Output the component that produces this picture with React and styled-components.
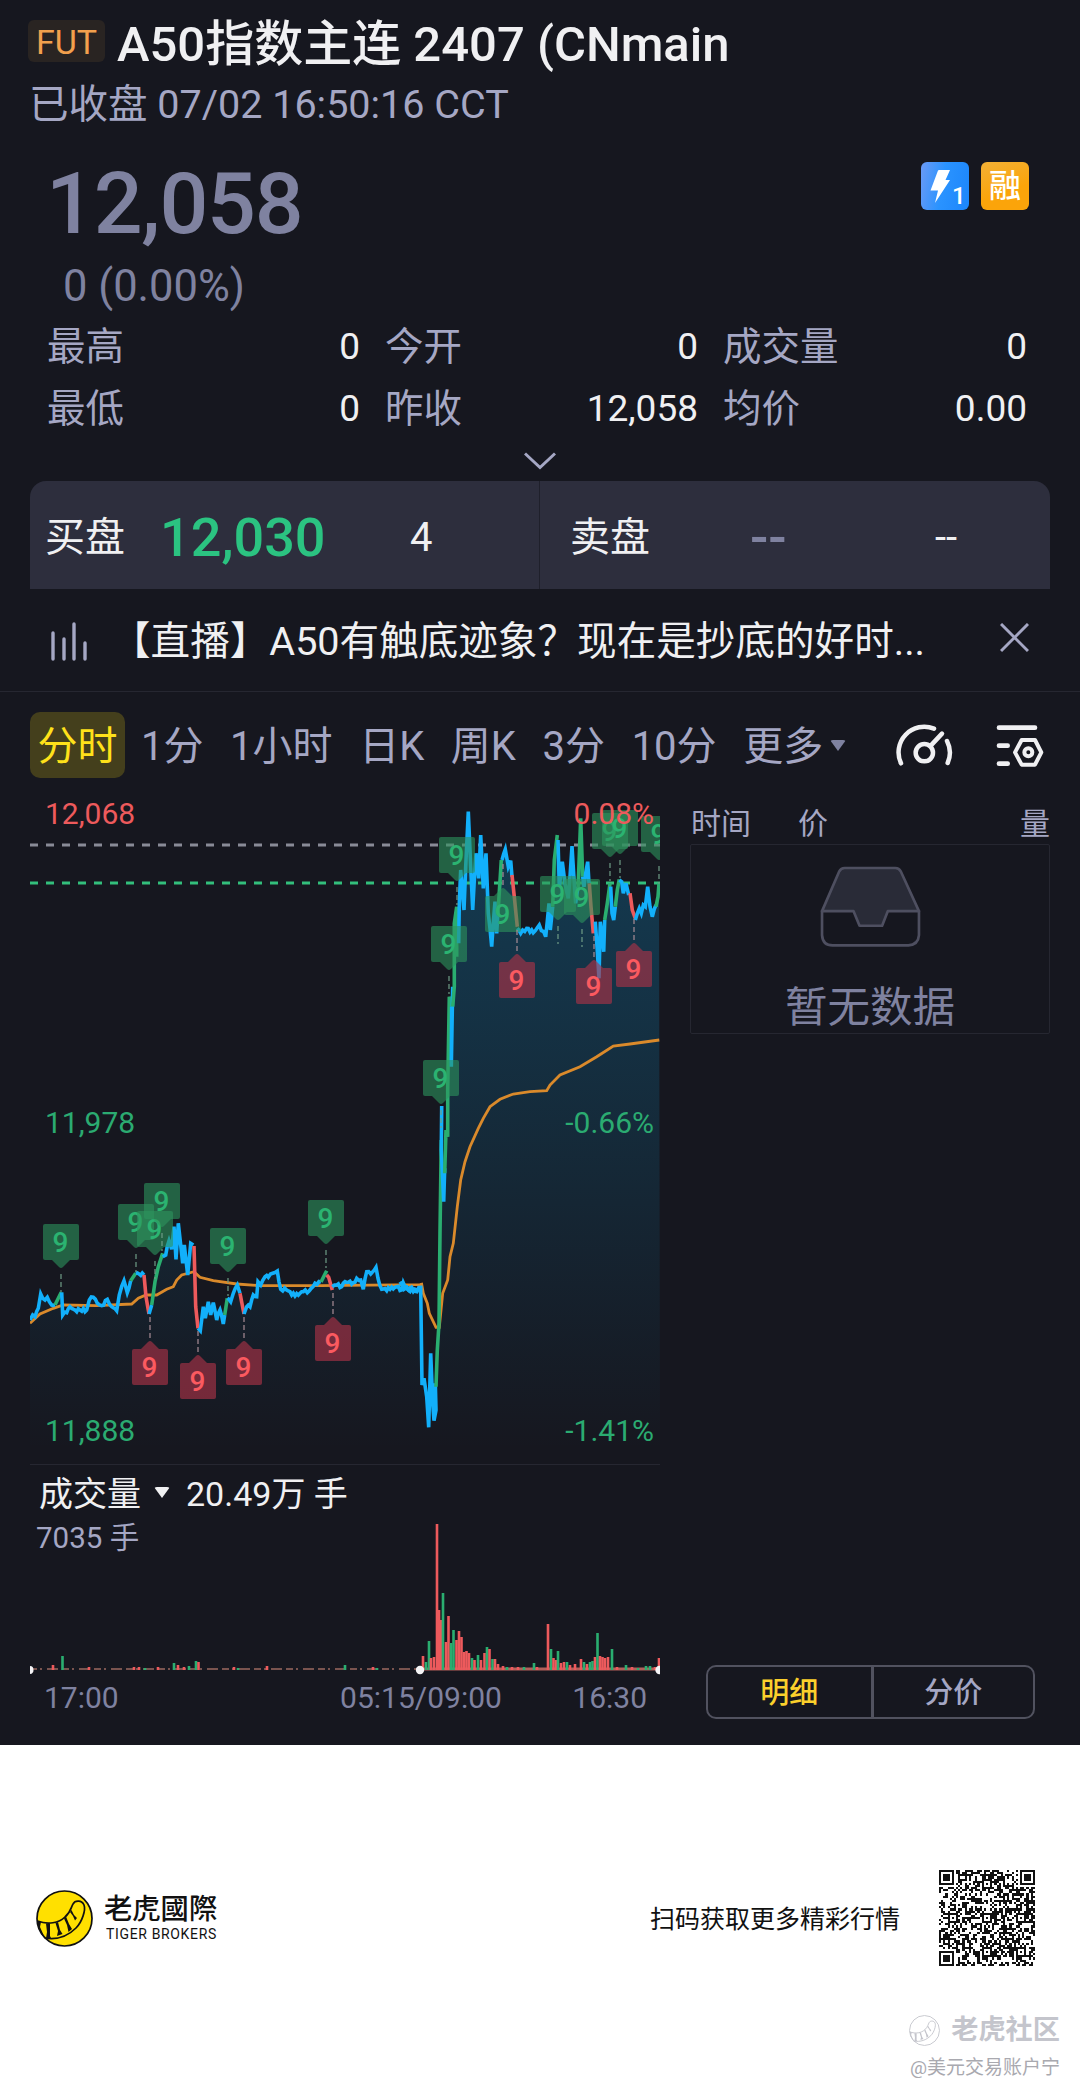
import React from 'react';
import styled, { createGlobalStyle } from 'styled-components';

const GlobalStyle = createGlobalStyle`
  body {
    margin: 0;
    background: #fff;
    font-family: Roboto, 'Noto Sans CJK SC', sans-serif;
  }
  svg {
    display: block;
    flex-shrink: 0;
  }
`;

const Screen = styled.main`
  display: flex;
  flex-direction: column;
  width: 1080px;
  height: 1745px;
  background: #16171f;
  color: #a5a7c4;
  overflow: hidden;
`;

const Header = styled.header`
  padding: 20px 28px 0;
`;

const TitleRow = styled.div`
  display: flex;
  align-items: flex-start;
  gap: 12px;
  height: 49px;
`;

const MarketTag = styled.span`
  width: 77px;
  height: 42px;
  border-radius: 6px;
  background: #292422;
  color: #f2a04d;
  font-size: 34px;
  line-height: 45px;
  text-align: center;
`;

const Title = styled.h1`
  margin: 0;
  color: #f0f0f2;
  font-size: 49px;
  font-weight: 500;
  line-height: 49px;
  white-space: nowrap;
`;

const Status = styled.div`
  margin: 12px 0 0 1px;
  font-size: 39.5px;
  line-height: 48px;
`;

const PriceRow = styled.div`
  display: flex;
  justify-content: space-between;
  margin: 32px 51px 0 46px;
`;

const Price = styled.div`
  color: #7f82a0;
  font-size: 86px;
  font-weight: 500;
  letter-spacing: -1.2px;
  line-height: 86px;
`;

const Badges = styled.div`
  display: flex;
  gap: 12px;
  padding-top: 1px;
`;

const Badge = styled.span`
  width: 48px;
  height: 48px;
  border-radius: 6px;
  background: ${(props) => props.fill};
  color: #fff;
  font-size: 32px;
  font-weight: 500;
  line-height: 48px;
  text-align: center;
`;

const Change = styled.div`
  margin: 18px 0 0 63px;
  color: #7f82a0;
  font-size: 43.5px;
  line-height: 44px;
`;

const Stats = styled.div`
  display: grid;
  grid-template-columns: 313px 313px 304px;
  column-gap: 25px;
  margin: 7px 48px 0 47px;
`;

const Stat = styled.div`
  display: flex;
  justify-content: space-between;
  font-size: 38.5px;
  line-height: 62px;
  b {
    color: #f0f0f2;
    font-weight: 400;
    font-size: 37px;
  }
`;

const Expand = styled.div`
  display: flex;
  justify-content: center;
  align-items: center;
  height: 41px;
`;

const QuoteBar = styled.div`
  display: grid;
  grid-template-columns: 1fr 1fr;
  height: 108px;
  margin: 0 30px;
  border-radius: 16px 16px 0 0;
  background: #2d2e3d;
`;

const Quote = styled.div`
  display: grid;
  grid-template-columns: ${(props) => props.columns};
  align-items: center;
  padding-left: ${(props) => props.inset}px;
  padding-top: 5px;
  border-right: ${(props) => (props.divided ? '1px solid #1f202b' : '0')};
  color: #f0f0f2;
  font-size: 40px;
  line-height: 60px;
`;

const QuotePrice = styled.span`
  color: ${(props) => (props.empty ? '#7f82a0' : '#2bc381')};
  font-size: 54px;
  font-weight: 500;
`;

const LiveRow = styled.div`
  display: flex;
  align-items: center;
  height: 98px;
  padding: 4px 51px 0 49px;
  border-bottom: 1px solid #262731;
`;

const LiveText = styled.div`
  flex: 1;
  margin-left: 22px;
  color: #f0f0f2;
  font-size: 39.6px;
  line-height: 60px;
  white-space: nowrap;
`;

const Toolbar = styled.nav`
  display: flex;
  align-items: center;
  height: 66px;
  padding: 20px 0 0 30px;
`;

const Tab = styled.span`
  margin-right: ${(props) => (props.active ? 16 : 26.6)}px;
  padding: ${(props) => (props.active ? '0 7.5px' : '0')};
  border-radius: 10px;
  background: ${(props) => (props.active ? '#443f1c' : 'none')};
  color: ${(props) => (props.active ? '#ffe11a' : '#a5a7c4')};
  font-size: 40px;
  line-height: 70px;
  height: 66px;
`;

const Caret = styled.i`
  border: solid transparent;
  border-width: 11px 8px 0;
  border-top-color: ${(props) => props.color};
  border-radius: 3px;
`;

const MoreTab = styled(Tab)`
  margin-right: 7px;
`;

const Tools = styled.div`
  display: flex;
  align-items: center;
  gap: 43px;
  margin-left: auto;
  margin-right: 36px;
`;

const Board = styled.section`
  display: grid;
  grid-template-columns: 630px 360px;
  column-gap: 30px;
  flex: 1;
  padding: 12px 30px 0;
`;

const VolumeTitle = styled.div`
  display: flex;
  align-items: center;
  height: 40px;
  padding: 9px 0 2px 9px;
  border-top: 1px solid #262731;
  color: #f0f0f2;
  font-size: 34px;
  line-height: 40px;
  ${Caret} {
    margin: 0 16px 3px 13px;
  }
`;

const Ticks = styled.aside`
  display: flex;
  flex-direction: column;
`;

const TickHead = styled.div`
  display: grid;
  grid-template-columns: 107px 1fr auto;
  padding: 13px 0 0 1px;
  font-size: 30px;
  line-height: 41px;
`;

const Empty = styled.div`
  display: flex;
  flex-direction: column;
  align-items: center;
  box-sizing: border-box;
  height: 190px;
  padding-top: 21px;
  border: 1px solid #262731;
  border-radius: 2px;
  color: #7f82a0;
  font-size: 42.5px;
  line-height: 60px;
  svg {
    margin-bottom: 31px;
  }
`;

const Switch = styled.div`
  display: grid;
  grid-template-columns: 1fr 1fr;
  box-sizing: border-box;
  height: 54px;
  margin: auto 15px 26px 16px;
  border: 2px solid #51525f;
  border-radius: 10px;
  font-size: 29px;
  line-height: 53px;
  text-align: center;
`;

const Option = styled.span`
  height: 50px;
  color: ${(props) => (props.active ? '#fbd02c' : '#a5a7c4')};
  font-weight: 500;
  & + & {
    border-left: 3px solid #51525f;
  }
`;

const Footer = styled.footer`
  width: 1080px;
  height: 346px;
  background: #fff;
  color: #111;
`;

const BrandRow = styled.div`
  display: flex;
  align-items: center;
  height: 96px;
  padding: 125px 45px 0 36px;
`;

const BrandName = styled.div`
  margin: 2px auto 0 11px;
  font-family: Roboto, 'Noto Sans CJK TC', sans-serif;
  font-size: 28.3px;
  font-weight: 500;
  line-height: 30px;
  small {
    display: block;
    margin-left: 2px;
    font-size: 14px;
    font-weight: 400;
    letter-spacing: 0.65px;
    line-height: 19px;
  }
`;

const ScanHint = styled.div`
  margin: 3px 39px 0 0;
  font-size: 25px;
  line-height: 30px;
`;

const Watermark = styled.div`
  display: flex;
  flex-direction: column;
  align-items: flex-end;
  padding: 46px 20px 0 0;
  color: #a9a9af;
  font-size: 19px;
  line-height: 32px;
`;

const Community = styled.div`
  display: flex;
  align-items: center;
  gap: 11px;
  color: #c4c5cc;
  font-size: 27.2px;
  font-weight: 700;
  line-height: 36px;
  padding-bottom: 4px;
`;

const BLUE = '#12b0fb';
const GREEN = '#2aae70';
const RED = '#ed5a5c';

// Price runs: [colour, origin x, origin y, points in thirds of a pixel]
const RUNS = [
  [BLUE, 20, 1160, '30,480 38,465 45,470 55,445 62,402 68,415 75,420 82,412 88,425 95,435 105,435'],
  [GREEN, 20, 1160, '105,435 115,415 124,397'],
  [BLUE, 20, 1160, '125,397 128,465 140,458 150,440 165,450 180,450 200,450 208,420 220,412 232,430 245,437 262,418 275,440 290,452 298,405 312,362 322,398 332,362'],
  [GREEN, 20, 1160, '332,362 347,340'],
  [BLUE, 20, 1160, '347,340 372,345'],
  [RED, 20, 1160, '372,345 378,410 387,462'],
  [BLUE, 20, 1160, '387,462 395,435'],
  [GREEN, 20, 1160, '395,435 405,365 415,320 428,280'],
  [BLUE, 20, 1160, '428,290 437,285 447,242 455,268 462,200 468,298 475,190 482,255 488,310 493,255 503,345 512,250 520,255'],
  [RED, 20, 1160, '522,258 527,440 534,505'],
  [BLUE, 20, 1160, '534,505 541,512 550,440 556,475 565,425 572,465 580,428 590,480 600,450 610,492 614,465'],
  [GREEN, 20, 1160, '614,465 622,415'],
  [BLUE, 20, 1160, '622,415 632,425 640,400 652,375 660,400'],
  [RED, 20, 1160, '660,400 672,462'],
  [BLUE, 20, 1160, '672,462 680,440 690,440 700,405 710,410 714,365 722,375 735,350 745,352 758,340 772,333 782,388 800,390 825,408 850,395 868,392 885,370 903,366'],
  [GREEN, 20, 1160, '903,366 920,332'],
  [RED, 20, 1160, '920,345 926,352 937,390'],
  [BLUE, 20, 1160, '937,380 950,375 965,380 975,365 1000,368 1010,355 1022,360 1030,388 1040,335 1052,342 1068,322 1074,355 1085,388 1110,388 1130,380 1145,390 1150,368 1165,390 1190,390'],
  [BLUE, 400, 1090, '0,575 12,598 25,600 35,592 45,604 62,592 66,885 72,865 80,920 86,1012 92,790 98,940 102,992 108,960 106,880'],
  [GREEN, 400, 1090, '108,890 112,780 117,700 120,430 124,150'],
  [BLUE, 400, 1090, '125,48 124,180 131,335 134,235'],
  [GREEN, 400, 1090, '134,250 138,120 143,140 143,0 148,-280 155,-250'],
  [BLUE, 400, 790, '155,650 154,830 158,590'],
  [GREEN, 400, 790, '158,650 163,590 163,400 170,350 170,500'],
  [BLUE, 400, 790, '176,460 178,340 182,240 192,360 197,230 205,65 212,230 218,360 228,190 236,265 242,135 250,295 258,190 265,370 275,470 285,335 290,430 294,360'],
  [GREEN, 400, 790, '294,370 304,210'],
  [BLUE, 400, 790, '306,210 316,178 325,230 332,212 336,260'],
  [RED, 400, 790, '336,255 343,320 352,410'],
  [BLUE, 400, 790, '352,415 362,430 380,415 400,428 418,405 437,440 447,340 451,420 458,350'],
  [GREEN, 400, 790, '458,350 463,210 472,135'],
  [BLUE, 400, 790, '474,150 478,290 487,215 495,280 505,325 516,168 527,340 534,290'],
  [GREEN, 400, 790, '534,300 542,85 548,260'],
  [BLUE, 400, 790, '548,260 552,290 563,215 567,280'],
  [RED, 400, 790, '568,280 573,350 580,430'],
  [BLUE, 400, 790, '586,395 597,565 601,395 611,485 614,390'],
  [GREEN, 400, 790, '614,390 622,340 630,280'],
  [BLUE, 400, 790, '632,290 636,370 641,390 646,350'],
  [GREEN, 400, 790, '646,350 652,300 658,268'],
  [BLUE, 400, 790, '658,270 665,275 670,310 678,280 686,315'],
  [RED, 400, 790, '690,310 697,360 706,385'],
  [BLUE, 400, 790, '706,390 718,355 724,370 730,345 736,350 743,290 750,350 757,380 768,345'],
  [GREEN, 400, 790, '768,350 774,320 777,280']
];

const AVERAGE = [
  [20, 1160, '30,490 60,462 100,445 130,435 230,437 335,432 355,415 378,405 410,405 440,388 460,380 470,360 485,345 522,335 540,352 580,362 650,372 720,377 900,377 1200,374'],
  [400, 1090, '65,583 70,610 82,640 88,670 108,712 118,712 128,610 143,570 150,500 160,460 172,350 182,270 195,215 210,170 235,115 250,85 270,50 300,28 340,12 390,5 440,2 450,-15 480,-45 540,-70 590,-100 640,-132 690,-138 778,-150']
];

const parse = (x, y, points) =>
  points.split(' ').map((p) => {
    const [px, py] = p.split(',').map(Number);
    return [x + px / 3, y + py / 3];
  });

// small tick noise between the recorded quotes
const roughen = (points) => {
  const out = [];
  points.forEach((p, i) => {
    const next = points[i + 1];
    out.push(p);
    if (!next) return;
    const steps = Math.floor((next[0] - p[0]) / 1.6);
    for (let s = 1; s < steps; s++) {
      const t = s / steps;
      const noise = Math.sin((i + 1) * 7.3 + s * 2.6) * 1.7;
      out.push([p[0] + (next[0] - p[0]) * t, p[1] + (next[1] - p[1]) * t + noise]);
    }
  });
  return out;
};

const join = (points) => points.map((p) => p.map((n) => n.toFixed(1)).join(',')).join(' ');

const RUN_LINES = RUNS.map(([color, x, y, points]) => {
  const line = parse(x, y, points);
  return { color, points: color === BLUE ? roughen(line) : line };
});
const AREA = join(RUN_LINES.flatMap((run) => run.points)) + ' 660,1464 30,1464';
const AVERAGE_LINE = join(AVERAGE.flatMap((part) => parse(...part)));

// [centre x, box top, pointer up]
const BUY_MARKS = [
  [61, 1224], [136, 1204], [155, 1211], [162, 1183], [228, 1228], [326, 1200], [457, 837], [449, 926],
  [441, 1060], [503, 896, true], [558, 876], [582, 879], [610, 813], [620, 810], [659, 816]
];
const SELL_MARKS = [
  [150, 1349, true], [198, 1363, true], [244, 1349, true], [333, 1325, true],
  [517, 962, true], [594, 968, true], [634, 951, true]
];

const Mark = ({ x, y, up, fill, color }) => (
  <g>
    <path
      d={up ? `M${x} ${y - 32}V${y - 10}` : `M${x} ${y + 50}V${y + 68}`}
      stroke={up ? '#a98d96' : '#6f9c86'}
      strokeWidth="1.2"
      strokeDasharray="5 3"
    />
    <rect x={x - 18} y={y} width="36" height="36" rx="2" fill={fill} />
    <path d={up ? `M${x - 9} ${y}l7-7q2-2 4 0l7 7z` : `M${x - 9} ${y + 36}l7 7q2 2 4 0l7-7z`} fill={fill} />
    <text x={x - 0.5} y={y + 28} fill={color} fontSize="28" fontWeight="500" textAnchor="middle">
      9
    </text>
  </g>
);

const PriceChart = () => (
  <svg width="630" height="674" viewBox="30 790 630 674">
    <defs>
      <linearGradient id="area" x1="0" y1="810" x2="0" y2="1450" gradientUnits="userSpaceOnUse">
        <stop offset="0" stopColor="#0d9fdd" stopOpacity=".27" />
        <stop offset=".3" stopColor="#0d9fdd" stopOpacity=".2" />
        <stop offset="1" stopColor="#0d9fdd" stopOpacity="0" />
      </linearGradient>
    </defs>
    <polygon points={AREA} fill="url(#area)" />
    <path d="M30 845H660" stroke="#898b97" strokeWidth="3" strokeDasharray="8 8" />
    <path d="M30 883H660" stroke="#33bf7c" strokeWidth="3" strokeDasharray="8 8" />
    <polyline points={AVERAGE_LINE} fill="none" stroke="#da8a2b" strokeWidth="2.8" />
    {RUN_LINES.map((run, i) => (
      <polyline key={i} points={join(run.points)} fill="none" stroke={run.color} strokeWidth="3.6" />
    ))}
    {BUY_MARKS.map(([x, y, up]) => (
      <Mark key={x} x={x} y={y} up={up} fill="rgba(45,148,93,.6)" color="#2bb371" />
    ))}
    {SELL_MARKS.map(([x, y, up]) => (
      <Mark key={x} x={x} y={y} up={up} fill="rgba(172,50,72,.63)" color="#fb5a60" />
    ))}
    <g fontSize="30" fill="#2bab71">
      <text x="45" y="823.5" fill={RED}>12,068</text>
      <text x="45" y="1132.5">11,978</text>
      <text x="45" y="1440.5">11,888</text>
      <g textAnchor="end">
        <text x="654" y="823.5" fill={RED}>0.08%</text>
        <text x="654" y="1132.5">-0.66%</text>
        <text x="654" y="1440.5">-1.41%</text>
      </g>
    </g>
  </svg>
);

// minute volumes: x, height, r/g
const VOLUMES = `53,5,r 62.5,14,g 89,3,r 134,3,r 139,3,r 145,2,g 158,3,r 174,7,g 178,5,r 184,3,r 189,4,g 196,9,g 198.5,8,r
  234,3,r 238,2,g 267,4,r 345,5,g 373,3,r 377,2,g 423,14,r 426,8,g 429,29,g 431,12,r 434,13,r 437,146,r 439,60,r 441,50,r
  443,77,g 446,28,r 448.5,54,r 451,27,g 453.5,40,g 456.5,30,r 459,39,r 461.5,33,r 464,18,r 466.5,19,r 469,17,r 472,12,g
  474.5,10,r 478,15,g 481,10,r 484.5,17,r 487,23,g 489.5,21,r 492.5,11,g 495,11,r 498,6,r 503,4,r 507,3,g 512,3,r 518,3,r
  524,3,g 534,7,g 537,3,r 548,46,r 551,21,g 553.5,12,r 556,10,r 558,19,g 561,7,r 564,8,r 567,8,g 570,5,r 575,6,r 581,11,r
  584,8,g 587,6,r 590,8,g 592.5,9,g 595,13,r 597.5,37,g 600,14,r 602.5,13,r 605,12,r 608,13,r 612,21,g 617,3,r 626,5,g
  632,3,r 638,2,g 646,4,g 650,4,g 655,3,r 659,12,r`
  .split(/\s+/)
  .map((v) => v.split(','));

const VolumeChart = () => (
  <svg width="630" height="204" viewBox="30 1516 630 204" fontSize="30">
    <path d="M30 1669H420" stroke="#9c6a60" strokeWidth="1.6" strokeDasharray="7 3 2 5 11 4" />
    <path d="M420 1669H660" stroke="#b2605a" strokeWidth="3" />
    {VOLUMES.map(([x, h, side]) => (
      <rect key={x} x={x - 1.3} y={1670 - h} width="2.6" height={h} fill={side === 'r' ? RED : GREEN} />
    ))}
    <g fill="#f4f4f6">
      <circle cx="29.5" cy="1670" r="4" />
      <circle cx="420" cy="1670" r="4.2" />
      <circle cx="659.5" cy="1670" r="4.2" />
    </g>
    <text x="36" y="1547.5" fill="#a5a7c4" fontSize="29.5">7035 手</text>
    <g fill="#7f82a0">
      <text x="44" y="1707.5">17:00</text>
      <text x="421" y="1707.5" textAnchor="middle">05:15/09:00</text>
      <text x="647" y="1707.5" textAnchor="end">16:30</text>
    </g>
  </svg>
);

const InboxIcon = () => (
  <svg width="101" height="81" viewBox="478 256 304 244" stroke="#4e4f60" strokeWidth="8" strokeLinejoin="round">
    <path d="M484 392L536 272Q541 262 552 262H705Q716 262 721 272L776 392H682L665 436H597L579 392Z" fill="#292b37" />
    <path d="M484 390V464Q486 495 516 495H744Q774 493 776 464V390" fill="none" />
  </svg>
);

const GaugeIcon = () => (
  <svg width="57" height="42" viewBox="48 40 171 126" fill="none" stroke="#f0f0f2" strokeWidth="13.5" strokeLinecap="round">
    <path d="M63 158A77 77 0 0 1 162 54" />
    <path d="M201 91A77 77 0 0 1 203 157" />
    <circle cx="133" cy="126" r="26" />
    <path d="M153 104L186 69" />
  </svg>
);

const ChartSettingsIcon = () => (
  <svg width="48" height="45" viewBox="348 40 144 135" fill="none" stroke="#f0f0f2" strokeWidth="14" strokeLinecap="round" strokeLinejoin="round">
    <path d="M357 54H465M357 108H383M357 162H383" />
    <path d="M425 91H465L484 128L465 165H425L405 128Z" strokeWidth="12" />
    <circle cx="445" cy="128" r="12" strokeWidth="12" />
  </svg>
);

const BoltIcon = () => (
  <svg width="48" height="48" viewBox="0 0 48 48" fill="#fff">
    <path d="M17 8.500Q17.300 8 18 8H29L24.500 18H29L14 41L17 28.500H9.500Z" />
    <text x="31" y="42" fontSize="24" fontWeight="500">1</text>
  </svg>
);

const TigerLogo = ({ size, face, line }) => (
  <svg width={size} height={size} viewBox="0 0 57 57" fill="none" stroke={line} strokeWidth="1.7">
    <circle cx="28.500" cy="28.500" r="27.500" fill={face} />
    <path d="M1.500 31C12 35 23 33 29 27C35 22 35 17 37 14C39 10 46 10 48 15C50 20 46 32 40 38C32 46 21 50 9 48" />
    <path d="M1.500 31L5 32L4 37L8 46L9 49Q2 41 1.500 31M10 33.500L14 33.500L14 46L15 48L10 48.500L11 42ZM19.500 33L22 32L24 40L26.500 44L21 46L22 41ZM28 28.500L30 26.500L33 34L36 39L32.500 42L31 35ZM34 22L35.500 20L38 25L41 28L39 30.500L37 26Z" fill={line} strokeWidth="0" />
  </svg>
);

const QR_SIZE = 45;

const inSquare = (x, y, left, top, size) => x >= left && y >= top && x < left + size && y < top + size;

// finder and alignment marks are nested rings around a solid centre
const ringModule = (x, y, left, top, size) => {
  const mid = (size - 1) / 2;
  const ring = Math.max(Math.abs(x - left - mid), Math.abs(y - top - mid));
  return ring === mid || ring <= mid - 2;
};

const qrPath = () => {
  let d = '';
  let seed = 2407;
  const finders = [[0, 0], [QR_SIZE - 7, 0], [0, QR_SIZE - 7]];
  const aligns = [[20, 4], [4, 20], [20, 20], [36, 20], [20, 36], [36, 36]];
  for (let y = 0; y < QR_SIZE; y++) {
    for (let x = 0; x < QR_SIZE; x++) {
      seed = (seed * 16807) % 2147483647;
      let on = (seed >> 8) % 100 < 51;
      if (x === 6 || y === 6) on = (x + y) % 2 === 0;
      aligns.forEach(([l, t]) => {
        if (inSquare(x, y, l, t, 5)) on = ringModule(x, y, l, t, 5);
      });
      finders.forEach(([l, t]) => {
        if (inSquare(x, y, l - 1, t - 1, 9)) on = false;
        if (inSquare(x, y, l, t, 7)) on = ringModule(x, y, l, t, 7);
      });
      if (on) d += `M${x} ${y}h1v1h-1z`;
    }
  }
  return d;
};

const QrCode = () => (
  <svg width="96" height="96" viewBox="0 0 45 45" shapeRendering="crispEdges">
    <path d={qrPath()} fill="#111" />
  </svg>
);

const STATS = [
  ['最高', '0'],
  ['今开', '0'],
  ['成交量', '0'],
  ['最低', '0'],
  ['昨收', '12,058'],
  ['均价', '0.00']
];

const TABS = ['分时', '1分', '1小时', '日K', '周K', '3分', '10分'];

export default function App() {
  return (
    <>
      <GlobalStyle />
      <Screen>
        <Header>
          <TitleRow>
            <MarketTag>FUT</MarketTag>
            <Title>A50指数主连 2407 (CNmain</Title>
          </TitleRow>
          <Status>已收盘 07/02 16:50:16 CCT</Status>
        </Header>
        <PriceRow>
          <Price>12,058</Price>
          <Badges>
            <Badge fill="linear-gradient(100deg, #6b9af5, #2a93ff 45%, #1c86fb)">
              <BoltIcon />
            </Badge>
            <Badge fill="linear-gradient(160deg, #f3b136, #fba40a 60%)">融</Badge>
          </Badges>
        </PriceRow>
        <Change>0 (0.00%)</Change>
        <Stats>
          {STATS.map(([label, value]) => (
            <Stat key={label}>
              <span>{label}</span>
              <b>{value}</b>
            </Stat>
          ))}
        </Stats>
        <Expand>
          <svg width="32" height="18" viewBox="0 0 32 18" fill="none" stroke="#a5a7c4" strokeWidth="3">
            <path d="M1 1.500L16 15.500L31 1.500" />
          </svg>
        </Expand>
        <QuoteBar>
          <Quote divided inset={15} columns="115px 250px 1fr">
            <span>买盘</span>
            <QuotePrice>12,030</QuotePrice>
            <span>4</span>
          </Quote>
          <Quote inset={30} columns="180px 185px 1fr">
            <span>卖盘</span>
            <QuotePrice empty>--</QuotePrice>
            <span>--</span>
          </Quote>
        </QuoteBar>
        <LiveRow>
          <svg width="40" height="40" viewBox="0 0 40 40" stroke="#a5a7c4" strokeWidth="3.400" strokeLinecap="round">
            <path d="M4 11V37M15 17V37M25 2V37M36 21V37" />
          </svg>
          <LiveText>【直播】A50有触底迹象？现在是抄底的好时...</LiveText>
          <svg width="29" height="39" viewBox="0 0 29 39" stroke="#a5a7c4" strokeWidth="3">
            <path d="M1 1L28 28M28 1L1 28" />
          </svg>
        </LiveRow>
        <Toolbar>
          {TABS.map((tab, i) => (
            <Tab key={tab} active={i === 0}>{tab}</Tab>
          ))}
          <MoreTab>更多</MoreTab>
          <Caret color="#7f82a0" />
          <Tools>
            <GaugeIcon />
            <ChartSettingsIcon />
          </Tools>
        </Toolbar>
        <Board>
          <div>
            <PriceChart />
            <VolumeTitle>
              成交量
              <Caret color="#f0f0f2" />
              20.49万 手
            </VolumeTitle>
            <VolumeChart />
          </div>
          <Ticks>
            <TickHead>
              <span>时间</span>
              <span>价</span>
              <span>量</span>
            </TickHead>
            <Empty>
              <InboxIcon />
              暂无数据
            </Empty>
            <Switch>
              <Option active>明细</Option>
              <Option>分价</Option>
            </Switch>
          </Ticks>
        </Board>
      </Screen>
      <Footer>
        <BrandRow>
          <TigerLogo size={57} face="#ffe000" line="#111" />
          <BrandName>
            老虎國際
            <small>TIGER BROKERS</small>
          </BrandName>
          <ScanHint>扫码获取更多精彩行情</ScanHint>
          <QrCode />
        </BrandRow>
        <Watermark>
          <Community>
            <TigerLogo size={31} face="none" line="#c4c5cc" />
            老虎社区
          </Community>
          @美元交易账户宁
        </Watermark>
      </Footer>
    </>
  );
}
